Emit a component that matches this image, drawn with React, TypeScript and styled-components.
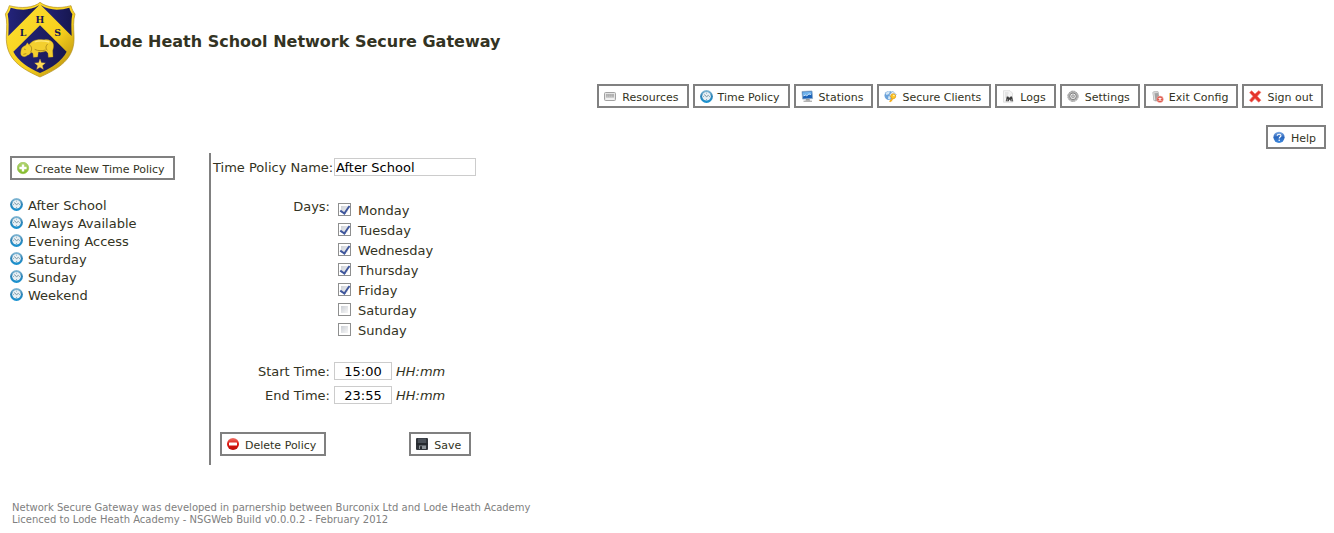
import React from "react";
import styled, { createGlobalStyle, css } from "styled-components";

const GlobalStyle = createGlobalStyle`
  * { box-sizing: border-box; }
  body {
    margin: 0;
    background: #fff;
    color: #333323;
    font: 13px/18px Verdana, "DejaVu Sans", sans-serif;
  }
`;

/* ---------- icons ---------- */

const Icon = styled.svg.attrs({ viewBox: "0 0 13 13", "aria-hidden": true })`
  flex: none;
  width: 13px;
  height: 13px;
  display: block;
`;

const CardIcon = () => (
  <Icon>
    <rect x="0.5" y="2.5" width="11" height="8" rx="1" fill="#e4e4e4" stroke="#a2a2a2" />
    <rect x="2" y="4" width="8" height="3.4" fill="#aaa" />
    <path d="M2.5 5h7M2.5 6.6h7" stroke="#ddd" strokeWidth=".6" strokeDasharray="1.4 .6" />
    <path d="M2 9h8" stroke="#fff" />
  </Icon>
);

const ClockIcon = () => (
  <Icon>
    <defs>
      <linearGradient id="clockRim" x1="0" y1="0" x2="0" y2="1">
        <stop offset="0" stopColor="#8fbfd8" />
        <stop offset=".45" stopColor="#2f83b5" />
        <stop offset="1" stopColor="#1893d2" />
      </linearGradient>
    </defs>
    <circle cx="6.5" cy="6.5" r="6.4" fill="url(#clockRim)" />
    <circle cx="6.5" cy="6.3" r="4.3" fill="#e6eff4" />
    <path d="M4.2 4.600l2.300 2 2.200-1.300" fill="none" stroke="#56788a" strokeWidth=".8" />
    <path d="M6.5 2.7v1M6.5 9v1M3 6.5h.9M9.1 6.5h.9" stroke="#7d9aaa" strokeWidth=".8" />
  </Icon>
);

const MonitorIcon = () => (
  <Icon>
    <path d="M1 1.5l10-.5.6 7.600-10 .5z" fill="#1b62b8" stroke="#8fa9c4" strokeWidth=".8" />
    <path d="M1.8 2.2l8.600-.5.2 2.600-8.700 1.800z" fill="#6fb2ec" />
    <path d="M2.5 6l2-1 1.400.9L8 3.800l2 .8" stroke="#e5f4ff" strokeWidth=".8" fill="none" />
    <path d="M5 9h3.500l.7 1.700H4.500z" fill="#9a9a9a" />
    <path d="M2.500 11.300h8.500" stroke="#b4b4b4" strokeWidth="1.400" />
  </Icon>
);

const GlobeKeyIcon = () => (
  <Icon>
    <circle cx="5" cy="5.500" r="4.500" fill="#6ba2da" />
    <path d="M1.500 3.500C3 1 5 1 6 1.500L5 4 2.600 5zM4.500 6l2.500.8-1 2.800-2-.6z" fill="#d3e6f5" />
    <path d="M8.500 1l3.800 3.800-3.600 3.600L5.200 5z" fill="#e7eff6" stroke="#7eaad3" strokeWidth=".7" />
    <circle cx="9.200" cy="6.200" r="2.500" fill="#ffc928" stroke="#d78c0d" strokeWidth=".6" />
    <path d="M8.200 8L5 11.200l1.300 1 1-.9.8.1.2-1.300L10 8.500z" fill="#f6ae1b" />
    <circle cx="9.900" cy="5.500" r=".8" fill="#fff7cf" />
  </Icon>
);

const LogIcon = () => (
  <Icon>
    <path d="M1.500.7h6.500l2.500 2.500v9h-9z" fill="#f5f5f5" stroke="#d5d5d5" strokeWidth=".7" />
    <path d="M3 3h3.500M3 5h3M3 7h2" stroke="#c8c8c8" strokeWidth=".7" />
    <path d="M4.800 6.500h1.500l.6 1h1l.6-1H10l1.300 4.800H8.600l-.4-1.600h-1l-.4 1.600H3.700z" fill="#3c3c3c" />
    <circle cx="5.300" cy="10" r=".9" fill="#8a8a8a" />
    <circle cx="9.800" cy="10" r=".9" fill="#8a8a8a" />
  </Icon>
);

const GearIcon = () => (
  <Icon>
    <circle cx="6" cy="6.300" r="5" fill="#b4b4b4" />
    <circle cx="6" cy="6.300" r="5.200" fill="none" stroke="#8c8c8c" strokeWidth=".8" strokeDasharray="2.200 .5" />
    <circle cx="6" cy="6.300" r="3.300" fill="#f2f2f2" stroke="#777" strokeWidth=".9" />
    <circle cx="6" cy="6.300" r="1.500" fill="#c4c4c4" stroke="#8d8d8d" strokeWidth=".7" />
  </Icon>
);

const ExitIcon = () => (
  <Icon>
    <path d="M1.500 2.500C2 .7 6.800.3 7.500 2l1 7.500c-1 2-5 2.400-6 .8z" fill="#a3a3a3" />
    <path d="M2.800 2.800l.9 7.500" stroke="#e0e0e0" strokeWidth="1.400" />
    <ellipse cx="4.600" cy="2.200" rx="2.700" ry="1" fill="#d5d5d5" />
    <circle cx="9" cy="9.300" r="3.300" fill="#de5549" stroke="#f3b5ae" strokeWidth=".6" />
    <path d="M7.700 8l2.600 2.600M10.300 8l-2.600 2.600" stroke="#fff" strokeWidth="1.100" />
  </Icon>
);

const CrossIcon = () => (
  <Icon>
    <path
      d="M2.700.7L6 4 9.700.7l2.200 1.600L8.300 6.200l3.600 4-2.200 2L6 8.500l-3.500 3.700-2-2L4 6.300.6 2.600z"
      fill="#e5342b"
      stroke="#f0776e"
      strokeWidth=".7"
    />
  </Icon>
);

const HelpIcon = () => (
  <Icon>
    <defs>
      <linearGradient id="helpBall" x1="0" y1="0" x2="0" y2="1">
        <stop offset="0" stopColor="#83aee5" />
        <stop offset=".5" stopColor="#2a66bd" />
        <stop offset="1" stopColor="#3e8ade" />
      </linearGradient>
    </defs>
    <circle cx="6" cy="6.300" r="5.600" fill="url(#helpBall)" />
    <path d="M4.200 4.800C4.300 2.700 8 2.700 7.900 4.900 7.800 6.200 6.200 6 6.200 7.500" fill="none" stroke="#fff" strokeWidth="1.200" />
    <circle cx="6.200" cy="9.300" r=".8" fill="#fff" />
  </Icon>
);

const PlusIcon = () => (
  <Icon>
    <defs>
      <linearGradient id="plusBall" x1="0" y1="0" x2="0" y2="1">
        <stop offset="0" stopColor="#b5d678" />
        <stop offset="1" stopColor="#7fba22" />
      </linearGradient>
    </defs>
    <circle cx="6" cy="6" r="5.700" fill="url(#plusBall)" stroke="#93bf4c" strokeWidth=".6" />
    <path d="M6 2.400v7.200M2.400 6h7.200" stroke="#fff" strokeWidth="2.400" />
  </Icon>
);

const NoEntryIcon = () => (
  <Icon>
    <defs>
      <linearGradient id="stopBall" x1="0" y1="0" x2="0" y2="1">
        <stop offset="0" stopColor="#f0746a" />
        <stop offset=".5" stopColor="#dc150d" />
        <stop offset="1" stopColor="#bd0d09" />
      </linearGradient>
    </defs>
    <circle cx="6" cy="6" r="6" fill="url(#stopBall)" />
    <rect x="2" y="4.600" width="8" height="3" rx=".5" fill="#fff" />
  </Icon>
);

const DiskIcon = () => (
  <Icon>
    <rect x="0" y="0" width="12" height="12" rx="1" fill="#30343a" />
    <rect x="2" y=".5" width="8" height="4.500" fill="#4b5159" />
    <rect x="3" y="7.500" width="7" height="3.500" fill="#8d9399" />
    <rect x="4" y="8.200" width="2" height="2.800" fill="#2b2f34" />
    <path d="M.5 6h11" stroke="#1b1e22" />
  </Icon>
);

const Crest = styled.svg`
  flex: none;
  width: 80px;
  height: 80px;
`;

const CrestLetter = styled.text`
  font: bold 28px "DejaVu Serif", serif;
  text-anchor: middle;
  fill: #15154f;
`;

const SchoolCrest = () => (
  <Crest viewBox="0 0 240 240" role="img" aria-label="Lode Heath School crest">
    <defs>
      <linearGradient id="gold" x1="0" y1="0" x2="1" y2="1">
        <stop offset="0" stopColor="#ffe233" />
        <stop offset=".6" stopColor="#f6cf1c" />
        <stop offset="1" stopColor="#a8800c" />
      </linearGradient>
      <linearGradient id="navy" x1="0" y1="0" x2="1" y2="0">
        <stop offset="0" stopColor="#24247c" />
        <stop offset="1" stopColor="#17174f" />
      </linearGradient>
    </defs>
    <path
      d="M120 7C102 23 64 27 28 17c-4 14-9 20-12 25 6 20 4 42 3 66-2 60 30 92 101 123 71-31 105-63 102-123-1-24-3-46 3-66-4-6-9-12-12-25-36 10-72 6-93-10z"
      fill="url(#gold)"
      stroke="#b08c1c"
      strokeWidth="2"
    />
    <path d="M118 15C90 33 60 31 32 23c-2 8-5 14-9 19 4 20 3 42 2 66z" fill="url(#navy)" />
    <path d="M122 15c28 18 58 16 86 8 2 8 5 14 9 19-4 20-3 42-2 66z" fill="url(#navy)" />
    <path d="M120 76l80 79c-15 28-44 48-80 64-36-16-65-36-80-64z" fill="url(#navy)" />
    <path
      d="M63 152c1-8 6-13 14-16l5-8 5 6c7-9 15-14 26-15 9-1 14 1 22 0 12-1 22 4 25 13 2 9-1 14-2 20l1 19-14 1-1-12-6-7c-7 3-15 4-23 3l-2 15-13 1-1-12-6-3c-3 5-6 8-11 9-4 5-12 5-16 2-5-4-4-10-3-16z"
      fill="#f3cf2f"
      stroke="#b8951c"
      strokeWidth="1"
    />
    <path d="M88 134c7 5 9 14 4 22M104 148c10 5 22 5 33 2M143 132c-7 7-6 14-1 19M72 147l5 2M70 163l9-2" fill="none" stroke="#b3901c" strokeWidth="3" />
    <path d="M104 126c12-5 32-3 44 0" fill="none" stroke="#ffe97a" strokeWidth="4" />
    <path d="M120 177l4 11 12 1-9 8 3 11-10-6-10 6 3-11-9-8 12-1z" fill="#ffdc54" stroke="#dfb344" />
    <CrestLetter x="120" y="68">H</CrestLetter>
    <CrestLetter x="69" y="108">L</CrestLetter>
    <CrestLetter x="173" y="108">S</CrestLetter>
  </Crest>
);

/* ---------- layout ---------- */

const Masthead = styled.header`
  display: flex;
  align-items: center;
  gap: 19px;
  height: 80px;
`;

const Title = styled.h1`
  margin: 4px 0 0;
  font-size: 16px;
  line-height: 20px;
`;

const Toolbar = styled.nav`
  display: flex;
  flex-wrap: wrap;
  justify-content: flex-end;
  gap: 4px;
  padding: 4px 11px 0;
`;

const HelpBar = styled.div`
  display: flex;
  justify-content: flex-end;
  padding: 17px 8px 4px;
`;

const boxed = css`
  display: inline-flex;
  align-items: center;
  gap: 5px;
  height: 24px;
  padding: 0 8px 0 5px;
  border: 2px solid #808080;
  background: #fff;
  color: #333323;
  font: 11px/16px Verdana, "DejaVu Sans", sans-serif;
  white-space: nowrap;
  cursor: pointer;
`;

const BoxLink = styled.a`
  ${boxed}
  text-decoration: none;
`;

const BoxButton = styled.button`
  ${boxed}
`;

const Caption = styled.span`
  padding-top: 4px;
`;

const Workspace = styled.main`
  display: flex;
`;

const Sidebar = styled.aside`
  flex: none;
  width: 209px;
  padding: 3px 10px 0;
`;

const PolicyList = styled.ul`
  margin: 16px 0 0;
  padding: 0;
  list-style: none;
`;

const PolicyLink = styled.a`
  display: flex;
  align-items: flex-start;
  gap: 5px;
  height: 18px;
  color: #333323;
  line-height: 20px;
  text-decoration: none;

  ${Icon} {
    margin-top: 2px;
  }
`;

const Editor = styled.form`
  flex: 1;
  min-width: 0;
  padding: 5px 0 9px 2px;
  border-left: 2px solid #808080;
`;

const Field = styled.div<{ $top?: number }>`
  display: grid;
  grid-template-columns: 117px auto auto;
  justify-content: start;
  align-items: center;
  column-gap: 4px;
  margin-top: ${(p) => p.$top ?? 0}px;
`;

const FieldLabel = styled.label`
  padding-top: 2px;
  line-height: 16px;
  text-align: right;
  white-space: nowrap;
`;

const TextBox = styled.input<{ $time?: boolean }>`
  width: ${(p) => (p.$time ? 58 : 142)}px;
  height: 18px;
  padding: 0 1px;
  border: 1px solid #ccc;
  border-radius: 0;
  color: #000;
  font: 13px/16px Verdana, "DejaVu Sans", sans-serif;
  text-align: ${(p) => (p.$time ? "center" : "left")};
`;

const Hint = styled.em`
  padding-top: 2px;
  line-height: 16px;
`;

const Days = styled.div`
  display: grid;
  grid-template-columns: 117px auto;
  justify-content: start;
  column-gap: 8px;
  margin-top: 22px;
`;

const DaysLabel = styled.span`
  text-align: right;
`;

const DayList = styled.div`
  padding-top: 2px;
`;

const Day = styled.label`
  display: flex;
  align-items: flex-start;
  gap: 7px;
  height: 20px;
  line-height: 22px;
`;

const Tick = styled.input.attrs({ type: "checkbox" })`
  appearance: none;
  display: grid;
  place-items: center;
  width: 13px;
  height: 13px;
  margin: 3px 0 0;
  border: 1px solid #8e8f8f;
  background: linear-gradient(135deg, #cbcfd5, #f6f6f6) content-box #f4f4f4;
  padding: 2px;

  &:checked::before {
    content: "";
    width: 4px;
    height: 8px;
    margin-top: -2px;
    border: solid #3f569b;
    border-width: 0 2px 2px 0;
    transform: rotate(35deg);
  }
`;

const Actions = styled.div`
  display: flex;
  gap: 83px;
  margin: 28px 0 0 7px;
`;

const Footer = styled.footer`
  padding: 37px 12px 8px;
  color: #808080;
  font-size: 10px;
  line-height: 12px;
`;

/* ---------- page ---------- */

const menu = [
  { text: "Resources", icon: <CardIcon /> },
  { text: "Time Policy", icon: <ClockIcon /> },
  { text: "Stations", icon: <MonitorIcon /> },
  { text: "Secure Clients", icon: <GlobeKeyIcon /> },
  { text: "Logs", icon: <LogIcon /> },
  { text: "Settings", icon: <GearIcon /> },
  { text: "Exit Config", icon: <ExitIcon /> },
  { text: "Sign out", icon: <CrossIcon /> },
];

const policies = ["After School", "Always Available", "Evening Access", "Saturday", "Sunday", "Weekend"];

const days = ["Monday", "Tuesday", "Wednesday", "Thursday", "Friday", "Saturday", "Sunday"];
const activeDays = new Set(days.slice(0, 5));

export default function App() {
  return (
    <>
      <GlobalStyle />
      <Masthead>
        <SchoolCrest />
        <Title>Lode Heath School Network Secure Gateway</Title>
      </Masthead>

      <Toolbar>
        {menu.map((item) => (
          <BoxLink href="#" key={item.text}>
            {item.icon}
            <Caption>{item.text}</Caption>
          </BoxLink>
        ))}
      </Toolbar>

      <HelpBar>
        <BoxLink href="#">
          <HelpIcon />
          <Caption>Help</Caption>
        </BoxLink>
      </HelpBar>

      <Workspace>
        <Sidebar>
          <BoxButton type="button">
            <PlusIcon />
            <Caption>Create New Time Policy</Caption>
          </BoxButton>
          <PolicyList>
            {policies.map((name) => (
              <li key={name}>
                <PolicyLink href="#">
                  <ClockIcon />
                  {name}
                </PolicyLink>
              </li>
            ))}
          </PolicyList>
        </Sidebar>

        <Editor onSubmit={(e) => e.preventDefault()}>
          <Field>
            <FieldLabel htmlFor="name">Time Policy Name:</FieldLabel>
            <TextBox id="name" defaultValue="After School" />
          </Field>

          <Days role="group" aria-labelledby="days">
            <DaysLabel id="days">Days:</DaysLabel>
            <DayList>
              {days.map((day) => (
                <Day key={day}>
                  <Tick defaultChecked={activeDays.has(day)} />
                  {day}
                </Day>
              ))}
            </DayList>
          </Days>

          <Field $top={22}>
            <FieldLabel htmlFor="start">Start Time:</FieldLabel>
            <TextBox id="start" $time defaultValue="15:00" />
            <Hint>HH:mm</Hint>
          </Field>
          <Field $top={6}>
            <FieldLabel htmlFor="end">End Time:</FieldLabel>
            <TextBox id="end" $time defaultValue="23:55" />
            <Hint>HH:mm</Hint>
          </Field>

          <Actions>
            <BoxButton type="button">
              <NoEntryIcon />
              <Caption>Delete Policy</Caption>
            </BoxButton>
            <BoxButton type="submit">
              <DiskIcon />
              <Caption>Save</Caption>
            </BoxButton>
          </Actions>
        </Editor>
      </Workspace>

      <Footer>
        Network Secure Gateway was developed in parnership between Burconix Ltd and Lode Heath Academy
        <br />
        Licenced to Lode Heath Academy - NSGWeb Build v0.0.0.2 - February 2012
      </Footer>
    </>
  );
}
